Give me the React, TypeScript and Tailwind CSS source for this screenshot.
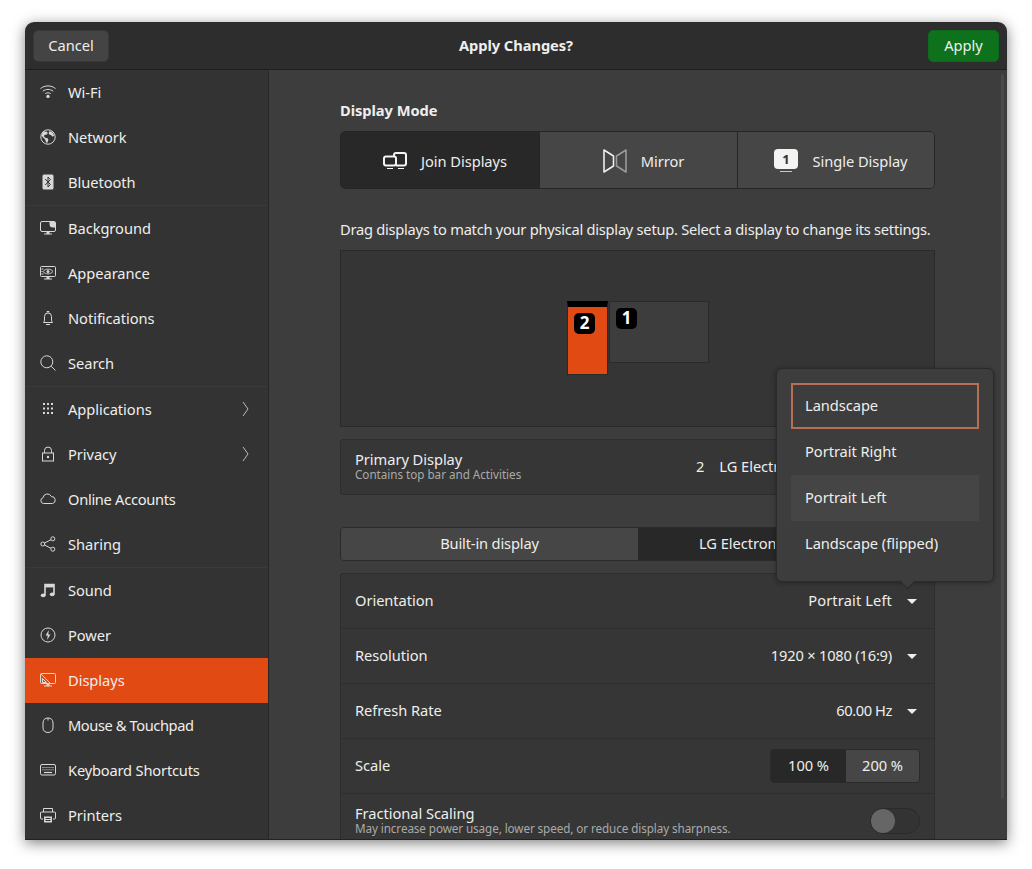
import React from 'react';

function Icon({ children, fill = 'none', stroke = 'currentColor' }: { children: React.ReactNode; fill?: string; stroke?: string }) {
  return (
    <svg width="16" height="16" viewBox="0 0 16 16" fill={fill} stroke={stroke} strokeWidth="1">
      {children}
    </svg>
  );
}

const stand = <path d="M6.5 12h3v1.5h2.5v1H4v-1h2.5z" fill="currentColor" stroke="none" />;

const WifiIcon = () => (
  <Icon>
    <path d="M.5 4.6c4.4-3.6 10.6-3.6 15 0M2.8 7.2c3.1-2.4 7.3-2.4 10.4 0M5.2 9.7c1.7-1.2 3.9-1.2 5.6 0" />
    <circle cx="8" cy="12.4" r="1.7" fill="currentColor" stroke="none" />
  </Icon>
);

const GlobeIcon = () => (
  <Icon>
    <circle cx="8" cy="8" r="7.2" />
    <path d="M4 2.5l3 .2.8 1.6-1.4 1.5H4.7L3.8 7.2l1.8 1.7 2 .3.8 1.6-1 3-1.3-.4-.9-3L2.6 8l-1-1.2C2 5 2.8 3.4 4 2.5zM9.6 2l3 1.5 1.6 3-1.5 1.2-1.4-1.4-2-.8-.7-1.6z" fill="currentColor" stroke="none" />
  </Icon>
);

const BluetoothIcon = () => (
  <Icon stroke="none">
    <rect x="2.5" y="0.5" width="11" height="15" rx="1.5" fill="currentColor" />
    <path d="M5.2 5l5.2 5.4L8 13V3l2.4 2.6L5.2 11" fill="none" stroke="#333333" strokeWidth="1" />
  </Icon>
);

const BackgroundIcon = () => (
  <Icon>
    <rect x="0.5" y="1.5" width="15" height="10" rx="1.5" />
    <path d="M9.5 1.5h4.5l1.5 1.5v4.5h-2.5a3.5 3.5 0 0 1-3.5-3.5z" fill="currentColor" stroke="none" />
    {stand}
  </Icon>
);

const AppearanceIcon = () => (
  <Icon>
    <rect x="0.5" y="1.5" width="15" height="10" rx="1" />
    <path d="M3 6.5c2.6-3.2 7.4-3.2 10 0-2.6 3.2-7.4 3.2-10 0z" strokeWidth="0.9" />
    <circle cx="8" cy="6.5" r="1.5" fill="currentColor" stroke="none" />
    <path d="M1.5 4h2M1.5 6.5h1M1.5 9h2" />
    {stand}
  </Icon>
);

const BellIcon = () => (
  <Icon>
    <path d="M3.5 12.5c.8-.9 1-1.8 1-3.5V6.5a3.5 3.5 0 0 1 7 0V9c0 1.7.2 2.6 1 3.5z" />
    <path d="M7 2.5V1.5h2v1M6 14.5h4" />
  </Icon>
);

const SearchIcon = () => (
  <Icon>
    <circle cx="6.8" cy="6.8" r="6" />
    <path d="M11.2 11.2l4.3 4.3" />
  </Icon>
);

const AppsIcon = () => (
  <Icon stroke="none" fill="currentColor">
    {[2, 6.5, 11].flatMap((y) =>
      [3, 7, 11].map((x) => <rect key={`${x}-${y}`} x={x} y={y} width="2" height="2" />),
    )}
  </Icon>
);

const LockIcon = () => (
  <Icon>
    <path d="M4.5 7V4.5a3.5 3.5 0 0 1 7 0V7" />
    <rect x="2.5" y="7" width="11" height="8" />
    <circle cx="8" cy="11" r="1.2" fill="currentColor" stroke="none" />
  </Icon>
);

const CloudIcon = () => (
  <Icon>
    <path d="M3.5 12.5a2.9 2.9 0 0 1-.5-5.7 4.4 4.4 0 0 1 8.4-1.2 3.5 3.5 0 0 1 1.1 6.9z" />
  </Icon>
);

const ShareIcon = () => (
  <Icon>
    <circle cx="2.8" cy="8" r="2" />
    <circle cx="12.8" cy="2.8" r="2" />
    <circle cx="12.8" cy="13.2" r="2" />
    <path d="M4.6 7l6.4-3.3M4.6 9l6.4 3.3" />
  </Icon>
);

const MusicIcon = () => (
  <Icon>
    <path d="M5 13V2.5h9V12" strokeWidth="1.6" />
    <path d="M5 3h9v2.4H5z" fill="currentColor" stroke="none" />
    <ellipse cx="3.2" cy="13.3" rx="2.4" ry="1.9" fill="currentColor" stroke="none" />
    <ellipse cx="12.2" cy="12.3" rx="2.4" ry="1.9" fill="currentColor" stroke="none" />
  </Icon>
);

const PowerIcon = () => (
  <Icon>
    <circle cx="8" cy="8" r="7" />
    <path d="M8.8 3L5.6 8.6h2.1L7.2 13l3.2-5.6H8.3z" fill="currentColor" stroke="none" />
  </Icon>
);

const DisplayIcon = () => (
  <Icon>
    <rect x="0.5" y="1.5" width="15" height="10" rx="1" />
    <path d="M1 2l9 9" />
    <path d="M2.5 6.5l4 4h-4z" />
    {stand}
  </Icon>
);

const MouseIcon = () => (
  <Icon>
    <path d="M8 3.5V1" />
    <path d="M8 1C5.2 1 3 2.5 3 6v5c0 2.6 2.2 4.5 5 4.5s5-1.9 5-4.5V6c0-3.5-2.2-5-5-5z" />
  </Icon>
);

const KeyboardIcon = () => (
  <Icon>
    <rect x="0.5" y="2.5" width="15" height="10.5" rx="1.5" />
    <path d="M2.5 5.5h11M2.5 7.8h11" strokeDasharray="1 1" />
    <path d="M4 10.5h8" strokeWidth="1.2" />
  </Icon>
);

const PrinterIcon = () => (
  <Icon>
    <path d="M3.5 5V1.5h9V5" />
    <path d="M3 12H1.5a1 1 0 0 1-1-1V6a1 1 0 0 1 1-1h13a1 1 0 0 1 1 1v5a1 1 0 0 1-1 1H13" />
    <rect x="4" y="9.5" width="8" height="6" fill="currentColor" stroke="none" />
    <path d="M5.5 11.5h5M5.5 13.5h5" stroke="#333333" />
  </Icon>
);

const Chevron = () => (
  <svg width="7" height="16" viewBox="0 0 7 16" fill="none" stroke="#bdbdbb" strokeWidth="1">
    <path d="M1 1l5 7-5 7" />
  </svg>
);

type NavItem = { label: string; icon: React.ReactNode; arrow?: boolean; active?: boolean; track?: string };

const sections: NavItem[][] = [
  [
    { label: 'Wi-Fi', icon: <WifiIcon /> },
    { label: 'Network', icon: <GlobeIcon /> },
    { label: 'Bluetooth', icon: <BluetoothIcon /> },
  ],
  [
    { label: 'Background', icon: <BackgroundIcon /> },
    { label: 'Appearance', icon: <AppearanceIcon /> },
    { label: 'Notifications', icon: <BellIcon /> },
    { label: 'Search', icon: <SearchIcon /> },
  ],
  [
    { label: 'Applications', icon: <AppsIcon />, arrow: true },
    { label: 'Privacy', icon: <LockIcon />, arrow: true },
    { label: 'Online Accounts', icon: <CloudIcon />, track: 'tracking-[-0.3px]' },
    { label: 'Sharing', icon: <ShareIcon /> },
  ],
  [
    { label: 'Sound', icon: <MusicIcon /> },
    { label: 'Power', icon: <PowerIcon /> },
    { label: 'Displays', icon: <DisplayIcon />, active: true },
    { label: 'Mouse & Touchpad', icon: <MouseIcon />, track: 'tracking-[-0.42px]' },
    { label: 'Keyboard Shortcuts', icon: <KeyboardIcon />, track: 'tracking-[-0.18px]' },
    { label: 'Printers', icon: <PrinterIcon /> },
  ],
];

function Sidebar() {
  return (
    <div className="w-[244px] shrink-0 overflow-hidden border-r border-[#282828] bg-[#333333]">
      {sections.map((items, i) => (
        <div key={i} className="border-b border-[#3a3a3a] last:border-b-0">
          {items.map((item) => (
            <div
              key={item.label}
              className={`flex h-[45px] items-center gap-[12px] pb-[2px] pl-[15px] pr-[19px] ${item.active ? 'bg-[#e24a14]' : ''}`}
            >
              <span className="flex w-4 justify-center text-[#d8d8d6]">{item.icon}</span>
              <span className={`flex-1 text-[#eeeeec] ${item.track ?? ''}`}>{item.label}</span>
              {item.arrow && <Chevron />}
            </div>
          ))}
        </div>
      ))}
    </div>
  );
}

function JoinIcon() {
  return (
    <svg width="24" height="18" viewBox="0 0 24 18" fill="none" stroke="#f4f4f2" strokeWidth="2">
      <rect x="1" y="4.5" width="12" height="9" rx="2" />
      <path d="M11 4V3a2 2 0 0 1 2-2h8a2 2 0 0 1 2 2v8.5a2 2 0 0 1-2 2h-8" />
      <path d="M4 16.5h6M15 16.5h6" strokeWidth="1" />
    </svg>
  );
}

function MirrorIcon() {
  return (
    <svg width="24" height="24" viewBox="0 0 24 24" fill="none">
      <path d="M1 1l9.5 6v10L1 23z" stroke="#eeeeec" strokeWidth="1.6" strokeLinejoin="round" />
      <path d="M23 1l-9.5 6v10l9.5 6z" stroke="#9a9a9a" strokeWidth="1.6" strokeLinejoin="round" />
    </svg>
  );
}

function SingleIcon() {
  return (
    <svg width="24" height="24" viewBox="0 0 24 24">
      <rect x="0" y="0" width="24" height="20" rx="4" fill="#f4f4f2" />
      <rect x="6" y="22" width="12" height="1" fill="#c8c8c8" />
      <text x="12" y="15" fontSize="13" fontWeight="700" textAnchor="middle" fill="#333333">1</text>
    </svg>
  );
}

function Caret() {
  return <span className="mt-[2px] h-0 w-0 border-x-[5px] border-t-[5px] border-x-transparent border-t-[#eeeeec]" />;
}

function Row({ label, value, track }: { label: string; value: string; track: string }) {
  return (
    <div className="flex h-[55px] items-center justify-between border-b border-[#2e2e2e] pb-[2px] pl-[14px] pr-[17px]">
      <span>{label}</span>
      <span className="flex items-center gap-[15px]">
        <span className={track}>{value}</span>
        <Caret />
      </span>
    </div>
  );
}

const menuItems = ['Landscape', 'Portrait Right', 'Portrait Left', 'Landscape (flipped)'];

function OrientationMenu() {
  return (
    <div className="absolute left-[507px] top-[298px] w-[218px] rounded-[6px] border border-[#2a2a2a] bg-[#3d3d3d] p-[14px] shadow-[0_1px_5px_rgba(0,0,0,0.35)]">
      {menuItems.map((item, i) => (
        <div
          key={item}
          className={`flex h-[46px] items-center border-2 px-[12px] pb-[2px] ${
            i === 0 ? 'border-[#b66e54]' : i === 2 ? 'border-transparent bg-[#454545]' : 'border-transparent'
          }`}
        >
          {item}
        </div>
      ))}
      <span className="absolute bottom-[-6px] left-[125px] h-[11px] w-[11px] rotate-45 border-b border-r border-[#2a2a2a] bg-[#3d3d3d]" />
    </div>
  );
}

function Badge({ n }: { n: number }) {
  return (
    <span className="ml-[6px] mt-[6px] flex h-[21px] w-[21px] items-center justify-center rounded-[5px] bg-black pb-[1px] text-[17px] font-bold text-white">
      {n}
    </span>
  );
}

function Content() {
  return (
    <div className="relative flex-1 overflow-hidden bg-[#3d3d3d]">
      <div className="ml-[71px] w-[595px] pt-[30px]">
        <div className="h-[20px] font-bold leading-[20px]">Display Mode</div>
        <div className="mt-[11px] grid h-[58px] grid-cols-[198px_198px_197px] overflow-hidden rounded-[5px] border border-[#262626]">
          <div className="flex items-center justify-center gap-[14px] bg-[#282828] pl-[10px] pt-[2px]">
            <JoinIcon />
            Join Displays
          </div>
          <div className="flex items-center justify-center gap-[14px] border-l border-[#262626] bg-[#464646] pl-[10px] pt-[2px]">
            <MirrorIcon />
            Mirror
          </div>
          <div className="flex items-center justify-center gap-[14px] border-l border-[#262626] bg-[#464646] pl-[10px] pt-[2px]">
            <SingleIcon />
            Single Display
          </div>
        </div>
        <div className="mt-[30px] h-[20px] whitespace-nowrap leading-[20px] tracking-[-0.26px]">
          Drag displays to match your physical display setup. Select a display to change its settings.
        </div>
        <div className="relative mt-[11px] h-[177px] border border-[#2a2a2a] bg-[#353535]">
          <div className="absolute left-[226px] top-[50px] h-[74px] w-[41px] border border-[#2a2a2a] border-t-[6px] border-t-black bg-[#e24a14]">
            <Badge n={2} />
          </div>
          <div className="absolute left-[268px] top-[50px] h-[62px] w-[100px] border border-[#2a2a2a] bg-[#3d3d3d]">
            <Badge n={1} />
          </div>
        </div>
        <div className="mt-[12px] flex h-[56px] items-center justify-between rounded-[3px] border border-[#2e2e2e] bg-[#363636] px-[14px]">
          <div className="pb-[2px]">
            <div className="leading-[16px]">Primary Display</div>
            <div className="text-[11.7px] leading-[14px] tracking-[-0.03px] text-[#aaaaa8]">Contains top bar and Activities</div>
          </div>
          <div className="flex w-[224px] pb-[2px]">
            <span>2</span>
            <span className="ml-[15px] w-[57px] overflow-hidden whitespace-nowrap">LG Electronics</span>
          </div>
        </div>
        <div className="mt-[32px] grid h-[34px] grid-cols-[297px_296px] overflow-hidden rounded-[4px] border border-[#2a2a2a]">
          <div className="flex items-center justify-center bg-[#464646] pb-[2px] tracking-[-0.15px]">Built-in display</div>
          <div className="flex items-center bg-[#282828] pb-[2px] pl-[61px]">
            <span className="w-[76px] overflow-hidden whitespace-nowrap">LG Electronics</span>
          </div>
        </div>
        <div className="mt-[12px] rounded-t-[3px] border border-[#2e2e2e] bg-[#363636]">
          <Row label="Orientation" value="Portrait Left" track="tracking-[0.12px]" />
          <Row label="Resolution" value="1920 × 1080 (16:9)" track="tracking-[-0.2px]" />
          <Row label="Refresh Rate" value="60.00 Hz" track="tracking-[-0.4px]" />
          <div className="flex h-[55px] items-center justify-between border-b border-[#2e2e2e] px-[14px]">
            <span className="pb-[2px]">Scale</span>
            <div className="grid h-[34px] w-[150px] grid-cols-[75px_73px] overflow-hidden rounded-[4px] border border-[#2a2a2a]">
              <div className="flex items-center justify-center bg-[#282828] pb-[2px]">100 %</div>
              <div className="flex items-center justify-center bg-[#464646] pb-[2px]">200 %</div>
            </div>
          </div>
          <div className="flex h-[54px] items-center justify-between px-[14px]">
            <div className="pb-[2px]">
              <div className="leading-[16px]">Fractional Scaling</div>
              <div className="text-[11.7px] leading-[14px] tracking-[-0.09px] text-[#aaaaa8]">May increase power usage, lower speed, or reduce display sharpness.</div>
            </div>
            <div className="flex h-[26px] w-[50px] items-center rounded-full border border-[#2a2a2a] bg-[#333333]">
              <span className="h-[24px] w-[24px] rounded-full bg-[#666666]" />
            </div>
          </div>
        </div>
      </div>
      <OrientationMenu />
      <span className="absolute right-[3px] top-[4px] h-[725px] w-[3px] rounded-full bg-[#4a4a4a]" />
    </div>
  );
}

export default function App() {
  return (
    <div className="h-[869px] w-[1032px] overflow-hidden bg-white pl-[25px] pt-[22px] font-['Noto_Sans',sans-serif] text-[14.67px] tracking-[-0.05px] text-[#eeeeec]">
      <div className="flex h-[818px] w-[982px] flex-col overflow-hidden rounded-t-[9px] border-b border-[#222222] shadow-[0_3px_14px_rgba(0,0,0,0.5)]">
        <div className="grid h-[48px] shrink-0 grid-cols-[1fr_auto_1fr] items-center border-b border-[#1f1f1f] bg-[#2d2d2d] px-[8px]">
          <div>
            <button className="h-[32px] w-[76px] rounded-[5px] border border-[#383838] bg-[#444444] pb-[2px] text-[#eeeeec]">Cancel</button>
          </div>
          <div className="pb-[2px] font-bold">Apply Changes?</div>
          <div className="flex justify-end">
            <button className="h-[32px] w-[71px] rounded-[5px] border border-[#0c6a1a] bg-[#0e721c] pb-[2px] text-[#eeeeec]">Apply</button>
          </div>
        </div>
        <div className="flex min-h-0 flex-1">
          <Sidebar />
          <Content />
        </div>
      </div>
    </div>
  );
}
